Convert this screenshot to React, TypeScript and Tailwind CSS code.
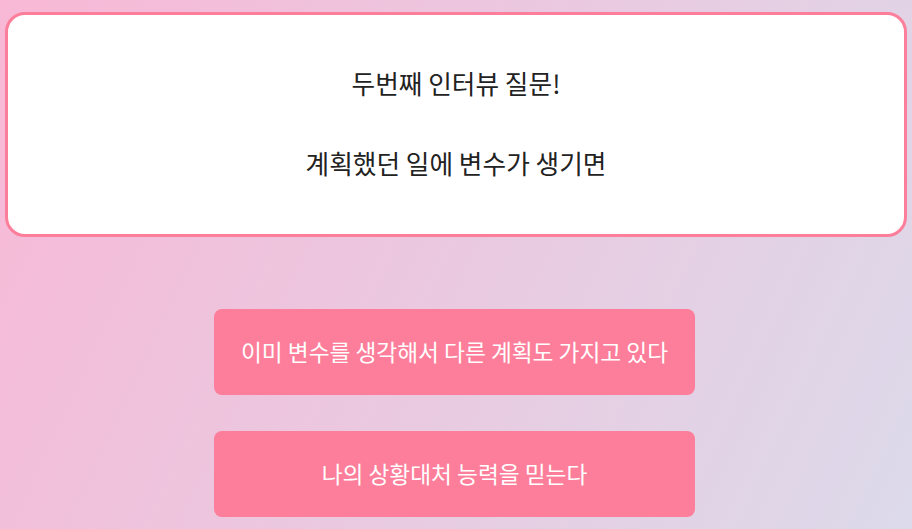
import React from 'react';

const answers = [
  '이미 변수를 생각해서 다른 계획도 가지고 있다',
  '나의 상황대처 능력을 믿는다',
];

const App: React.FC = () => {
  return (
    <div
      className="min-h-screen w-full bg-[linear-gradient(115deg,#f8b8d6_0%,#dcdaea_100%)] px-[5px] pt-3 pb-4"
      style={{ fontFamily: '"Noto Sans CJK KR", "Noto Sans", sans-serif' }}
    >
      {/* Question card */}
      <div className="flex h-[225px] flex-col items-center rounded-[20px] border-[3px] border-[#fd7e9a] bg-white pt-[50px] text-[#222222]">
        <p className="text-[25.7px] leading-[36px]">두번째 인터뷰 질문!</p>
        <p className="mt-[44px] text-[25.7px] leading-[36px]">계획했던 일에 변수가 생기면</p>
      </div>

      {/* Answers */}
      <div className="mt-[72px] flex flex-col items-center gap-[36px] pr-[3px]">
        {answers.map((answer, index) => (
          <button
            key={index}
            className="flex h-[86px] w-[481px] items-center justify-center rounded-lg bg-[#fd7e9a] text-[22.7px] text-white"
          >
            {answer}
          </button>
        ))}
      </div>
    </div>
  );
};

export default App;
